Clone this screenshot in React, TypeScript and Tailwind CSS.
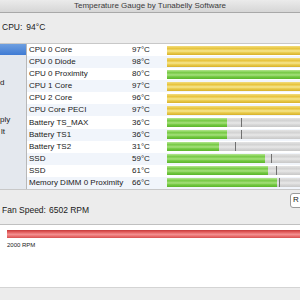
import React from 'react';

type Sensor = {
  name: string;
  temp: string;
  color: 'yellow' | 'green';
  fill?: number; // px of the 132px bar
  mark?: number;
};

const sensors: Sensor[] = [
  { name: 'CPU 0 Core', temp: '97°C', color: 'yellow' },
  { name: 'CPU 0 Diode', temp: '98°C', color: 'yellow' },
  { name: 'CPU 0 Proximity', temp: '80°C', color: 'green' },
  { name: 'CPU 1 Core', temp: '97°C', color: 'yellow' },
  { name: 'CPU 2 Core', temp: '96°C', color: 'yellow' },
  { name: 'CPU Core PECI', temp: '97°C', color: 'yellow' },
  { name: 'Battery TS_MAX', temp: '36°C', color: 'green', fill: 60, mark: 74 },
  { name: 'Battery TS1', temp: '36°C', color: 'green', fill: 60, mark: 74 },
  { name: 'Battery TS2', temp: '31°C', color: 'green', fill: 52, mark: 68 },
  { name: 'SSD', temp: '59°C', color: 'green', fill: 98, mark: 104 },
  { name: 'SSD', temp: '61°C', color: 'green', fill: 101, mark: 109 },
  { name: 'Memory DIMM 0 Proximity', temp: '66°C', color: 'green', fill: 110, mark: 112 },
];

const yellow =
  'bg-[linear-gradient(to_bottom,#f2dc7c_0%,#e7c33a_30%,#f6e690_55%,#e9cb4a_75%,#d7b12c_100%)]';
const green =
  'bg-[linear-gradient(to_bottom,#b4e68e_0%,#76c944_30%,#a6e07c_55%,#72c840_75%,#5cb52c_100%)]';
const gray =
  'bg-[linear-gradient(to_bottom,#e4e4e4_0%,#d2d2d2_30%,#e8e8e8_55%,#d6d6d6_75%,#c8c8c8_100%)]';

function Bar({ s }: { s: Sensor }) {
  const fillCls = s.color === 'yellow' ? yellow : green;
  if (s.fill === undefined) {
    return <div className={`h-[9px] flex-1 ${fillCls}`} />;
  }
  return (
    <div className={`relative flex h-[9px] flex-1 ${gray}`}>
      <div className={`h-full ${fillCls}`} style={{ width: s.fill }} />
      <div className="absolute top-0 h-full w-px bg-[#707070]" style={{ left: s.mark }} />
    </div>
  );
}

export default function App() {
  return (
    <div
      className="flex h-[300px] w-[300px] flex-col overflow-hidden bg-[#ececec] text-[8px] text-[#1a1a1a]"
      style={{ fontFamily: '"Liberation Sans", Arial, sans-serif' }}
    >
      {/* title bar */}
      <div className="flex h-[13px] items-center justify-center border-b border-[#a8a8a8] bg-[linear-gradient(to_bottom,#ebebeb,#d6d6d6)] text-[#3a3a3a]">
        Temperature Gauge by Tunabelly Software
      </div>

      <div className="flex h-[30px] items-center px-[2px] pb-[2px] text-[8.5px]">
        <span>CPU:</span>
        <span className="ml-[4px]">94°C</span>
      </div>

      {/* sensors */}
      <div className="flex h-[147px] border-y border-[#c8c8c8]">
        <div className="flex w-[27px] flex-col border-r border-[#b8b8b8] bg-[#e4e8ee]">
          <div className="h-[11px] bg-[linear-gradient(to_bottom,#6e9fe0,#3f7bd4)]" />
          <div className="mt-[22px] h-[12px] leading-[12px]">d</div>
          <div className="mt-[25px] h-[12px] leading-[12px]">ply</div>
          <div className="h-[11px] leading-[11px] pl-[1px]">lt</div>
        </div>
        <div className="flex flex-1 flex-col bg-white">
          {sensors.map((s, i) => (
            <div
              key={i}
              className={`flex h-[12.25px] items-center ${i % 2 === 1 ? 'bg-[#f1f5fb]' : 'bg-white'}`}
            >
              <div className="w-[105px] pl-[2px] whitespace-nowrap">{s.name}</div>
              <div className="w-[35px]">{s.temp}</div>
              <Bar s={s} />
            </div>
          ))}
        </div>
      </div>

      {/* fan */}
      <div className="flex h-[35px] items-center justify-between border-b border-[#c0c0c0]">
        <div className="pl-[2px] pt-[6px] text-[8.5px]">
          Fan Speed:<span className="ml-[3px]">6502 RPM</span>
        </div>
        <div className="mb-[14px] mr-[-10px] flex h-[15px] w-[20px] items-center rounded-[3px] border border-[#9a9a9a] bg-white pl-[2px] text-[8px]">
          R
        </div>
      </div>

      <div className="h-[63px] border-b border-[#d4d4d4] bg-white pl-[7px] pt-[5px]">
        <div className="h-[8px] bg-[linear-gradient(to_bottom,#c23a3a_0%,#e25a5a_25%,#f39090_55%,#e86a6a_80%,#d45050_100%)]" />
        <div className="mt-[3px] text-[6px]">2000 RPM</div>
      </div>
    </div>
  );
}
